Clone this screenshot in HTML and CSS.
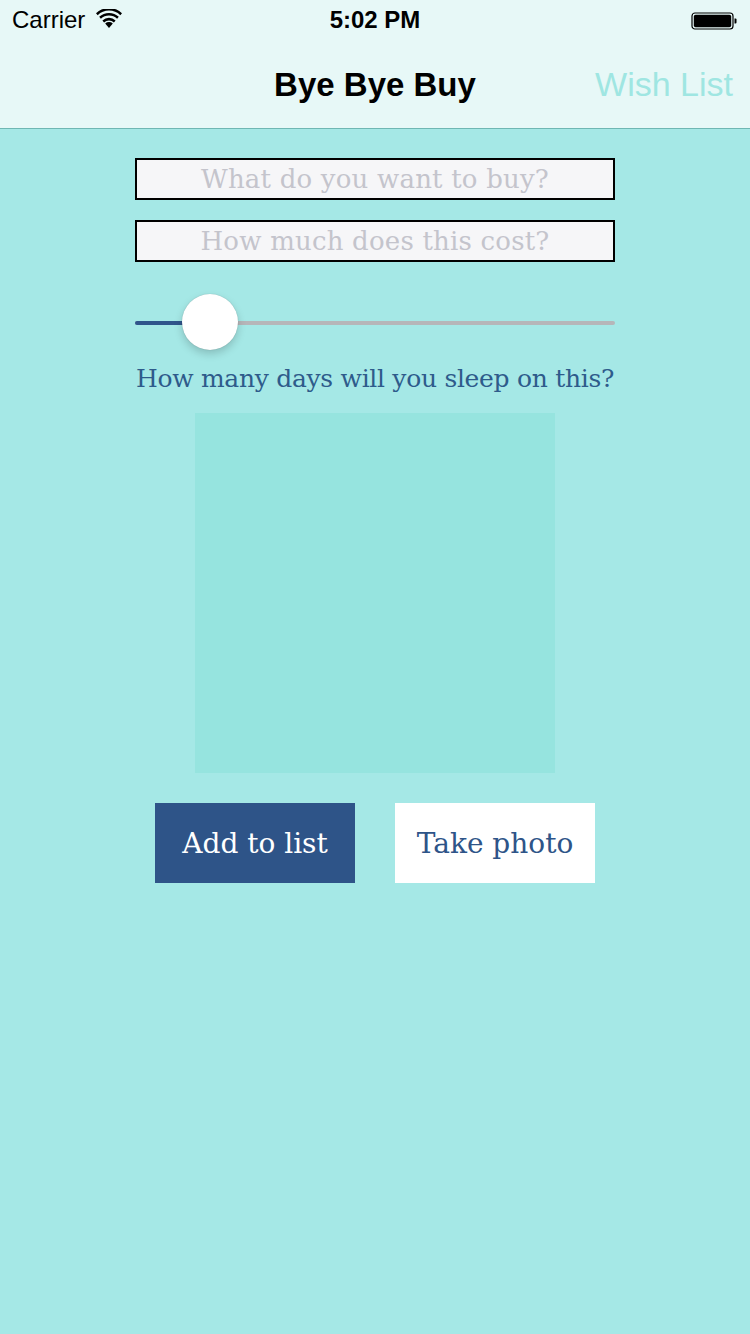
FILE: index.html
```html
<!DOCTYPE html>
<html>
<head>
<meta charset="utf-8">
<link rel="stylesheet" href="styles.css">
</head>
<body>
<div class="header">
  <div class="status">
    <div class="status-left">
      <span class="carrier">Carrier</span>
      <svg class="wifi" width="26" height="20" viewBox="0 0 26 20">
        <path d="M13 19 L9.2 14.6 A5.6 5.6 0 0 1 16.8 14.6 Z" fill="#000"/>
        <path d="M6.4 11.4 A9.6 9.6 0 0 1 19.6 11.4 L17.9 13.4 A7 7 0 0 0 8.1 13.4 Z" fill="#000"/>
        <path d="M3.2 7.8 A14.2 14.2 0 0 1 22.8 7.8 L21.1 9.8 A11.6 11.6 0 0 0 4.9 9.8 Z" fill="#000"/>
        <path d="M0 4.2 A18.8 18.8 0 0 1 26 4.2 L24.3 6.2 A16.2 16.2 0 0 0 1.7 6.2 Z" fill="#000"/>
      </svg>
    </div>
    <div class="time">5:02 PM</div>
    <div class="status-right">
      <svg width="46" height="20" viewBox="0 0 46 20">
        <rect x="1" y="2" width="41" height="16" rx="3" fill="none" stroke="#000" stroke-width="1.2"/>
        <rect x="2.8" y="3.8" width="37.4" height="12.4" rx="1.8" fill="#000"/>
        <path d="M43.5 7.5 h1 a1 1 0 0 1 1 1 v3 a1 1 0 0 1 -1 1 h-1 z" fill="#000"/>
      </svg>
    </div>
  </div>
  <div class="navbar">
    <div class="nav-title">Bye Bye Buy</div>
    <div class="nav-right">Wish List</div>
  </div>
</div>
<div class="content">
  <div class="field"><span class="placeholder">What do you want to buy?</span></div>
  <div class="field"><span class="placeholder">How much does this cost?</span></div>
  <div class="slider">
    <div class="track"><div class="fill"></div></div>
    <div class="thumb"></div>
  </div>
  <div class="label">How many days will you sleep on this?</div>
  <div class="photo"></div>
  <div class="buttons">
    <div class="btn btn-primary">Add to list</div>
    <div class="btn btn-secondary">Take photo</div>
  </div>
</div>
</body>
</html>
```
FILE: styles.css
```css
html, body {
  margin: 0;
  padding: 0;
}
body {
  width: 750px;
  height: 1334px;
  background: #a5e8e6;
  overflow: hidden;
  font-family: "Liberation Sans", Arial, sans-serif;
}
.header {
  background: #e7f8f7;
  border-bottom: 1px solid #6fb7b3;
  height: 128px;
}
.status {
  height: 40px;
  display: flex;
  align-items: center;
  justify-content: space-between;
  padding: 0 13px 0 12px;
  position: relative;
}
.status-left {
  display: flex;
  align-items: center;
  gap: 11px;
  font-size: 24px;
  color: #000;
}
.wifi {
  margin-top: -2px;
}
.time {
  position: absolute;
  left: 0;
  right: 0;
  text-align: center;
  font-size: 24px;
  font-weight: bold;
  color: #000;
  pointer-events: none;
}
.status-right {
  display: flex;
  align-items: center;
  margin-top: 1px;
}
.navbar {
  height: 88px;
  display: flex;
  align-items: center;
  justify-content: center;
  position: relative;
}
.nav-title {
  font-size: 33px;
  font-weight: bold;
  color: #000;
  margin-top: 2px;
}
.nav-right {
  position: absolute;
  right: 17px;
  top: 25px;
  font-size: 34px;
  color: #9fe6e2;
}
.content {
  display: flex;
  flex-direction: column;
  align-items: center;
  padding-top: 29px;
}
.field {
  width: 476px;
  height: 38px;
  border: 2px solid #000;
  background: #f6f6f8;
  display: flex;
  align-items: center;
  justify-content: center;
  margin-bottom: 20px;
}
.placeholder {
  font-family: "DejaVu Serif", "Liberation Serif", serif;
  font-size: 26px;
  color: #c4c4cc;
  letter-spacing: 0.2px;
}
.slider {
  width: 480px;
  height: 56px;
  position: relative;
  margin-top: 12px;
  display: flex;
  align-items: center;
}
.track {
  width: 100%;
  height: 4px;
  border-radius: 2px;
  background: #b6b6b9;
  position: relative;
  margin-top: 2px;
}
.fill {
  width: 60px;
  height: 100%;
  background: #2f558b;
  border-radius: 2px 0 0 2px;
}
.thumb {
  position: absolute;
  left: 47px;
  top: 0;
  width: 56px;
  height: 56px;
  border-radius: 50%;
  background: #fff;
  box-shadow: 0 4px 8px rgba(0, 0, 0, 0.18), 0 0 1px rgba(0, 0, 0, 0.25);
}
.label {
  width: 480px;
  margin-top: 14px;
  font-family: "DejaVu Serif", "Liberation Serif", serif;
  font-size: 25px;
  color: #2e5b8b;
  text-align: center;
  letter-spacing: -0.3px;
  line-height: 30px;
  white-space: nowrap;
}
.photo {
  width: 360px;
  height: 360px;
  background: #96e4df;
  margin-top: 19px;
}
.buttons {
  display: flex;
  gap: 40px;
  margin-top: 30px;
}
.btn {
  width: 200px;
  height: 80px;
  display: flex;
  align-items: center;
  justify-content: center;
  font-family: "DejaVu Serif", "Liberation Serif", serif;
  font-size: 28px;
}
.btn-primary {
  background: #2e5488;
  color: #fff;
}
.btn-secondary {
  background: #fff;
  color: #2e5488;
}
```
